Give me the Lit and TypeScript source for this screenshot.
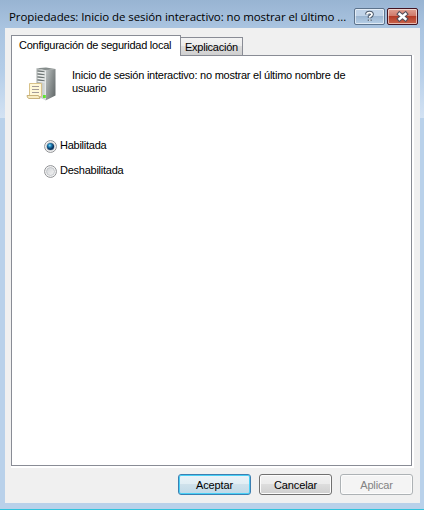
import { LitElement, html, css, svg } from "lit";
import { customElement, property } from "lit/decorators.js";

@customElement("server-icon")
class ServerIcon extends LitElement {
  static styles = css`:host{display:block;width:32px;height:34px} svg{display:block}`;
  render() {
    return html`<svg width="32" height="34" viewBox="0 0 32 34">
      <defs>
        <linearGradient id="side" x1="0" x2="1" y2=".6"><stop offset="0" stop-color="#c4c9c9"/><stop offset=".6" stop-color="#8c9292"/><stop offset="1" stop-color="#6b7172"/></linearGradient>
        <linearGradient id="front" x1="0" x2="1"><stop offset="0" stop-color="#a5abaa"/><stop offset="1" stop-color="#d8dcdb"/></linearGradient>
      </defs>
      <path d="M10.5 1.2 L20 .6 L29.5 2 L19 3.5Z" fill="#858c8b"/>
      <path d="M10.5 1.2 L19 3 V33 L10.5 29Z" fill="url(#front)"/>
      <path d="M19 3 L29.5 2 V28.5 L19.5 33.5Z" fill="url(#side)"/>
      <path d="M19.5 3.5V32" stroke="#e6e9e8"/>
      ${[4, 7, 10, 13].map((y) => svg`<path d="M11.5 ${y} L18.5 ${y + 0.8}" stroke="#6a7271" stroke-width="1.1"/><path d="M11.5 ${y + 1.3} L18.5 ${y + 2.1}" stroke="#f4f6f5" stroke-width="1"/>`)}
      <path d="M17 28h2.8v3H17z" fill="#5ee52c"/>
      <path d="M3.5 16.5H15.5V29.5H3.5Z" fill="#fff8d8" stroke="#d8c28a"/>
      <path d="M6 19.5h7M6 22.5h7M6 25.5h7" stroke="#a59c98"/>
      <path d="M1 28.5H12.5L14 31.5H3Q1 31 1 28.5Z" fill="#f8edc4" stroke="#c9b27c"/>
    </svg>`;
  }
}

@customElement("radio-option")
class RadioOption extends LitElement {
  @property() label = "";
  @property({ type: Boolean }) checked = false;
  static styles = css`
    :host{display:flex;align-items:center;height:14px;gap:3px}
    svg{display:block;flex:none}
    span{white-space:nowrap;padding-bottom:2px}
  `;
  render() {
    return html`<svg width="13" height="13" viewBox="0 0 13 13">
      <defs>
        <radialGradient id="dot" cx=".4" cy=".35"><stop offset="0" stop-color="#9be0fa"/><stop offset=".45" stop-color="#1f83b8"/><stop offset="1" stop-color="#0b3560"/></radialGradient>
        <linearGradient id="well" x2="1" y2="1"><stop offset="0" stop-color="#cfd2d5"/><stop offset="1" stop-color="#f6f6f6"/></linearGradient>
      </defs>
      <circle cx="6.5" cy="6.5" r="5.9" fill="#f8f8f8" stroke="#8e9093"/>
      <circle cx="6.5" cy="6.5" r="4" fill="url(#well)" stroke="#b9bdc1" stroke-width=".8"/>
      ${this.checked ? svg`<circle cx="6.5" cy="6.5" r="3.6" fill="url(#dot)"/>` : ""}
    </svg><span>${this.label}</span>`;
  }
}

@customElement("app-root")
class AppRoot extends LitElement {
  static styles = css`
    :host{display:flex;flex-direction:column;box-sizing:border-box;width:424px;height:510px;padding:0 4px 6px 5px;
      border-bottom:1px solid #2fc4dd;overflow:hidden;color:#000;
      background:linear-gradient(#98b4d2 0,#aac4e0 28px,#b4cde8 70px,#d3e2f3 118px,#b9d1ea 118px);
      font:11px/13px "Liberation Sans",Arial,sans-serif;letter-spacing:-.25px}
    .title{display:flex;height:28px;flex:none;padding:8px 2px 0 4px;box-sizing:border-box}
    .caption{flex:1;min-width:0;white-space:nowrap;font:11.5px/17px "Open Sans","Noto Sans",sans-serif;letter-spacing:-.09px}
    .ctl{box-sizing:border-box;flex:none;width:31px;height:17px;border:1px solid #5d738c;border-radius:2px;margin-left:2px;
      box-shadow:inset 0 0 0 1px #ffffff90;background:linear-gradient(#c0d3e8 0 48%,#9db7d2 50%,#b7cfe7)}
    .ctl svg{display:block}
    .close{border-color:#431422;background:linear-gradient(#dfa193 0,#cf7767 48%,#b43b26 50%,#c9654d)}
    .body{flex:1;background:#f0f0f0;padding:7px 7px 8px 6px;display:flex;flex-direction:column}
    .tabs{display:flex;align-items:flex-end;height:20px;flex:none}
    .tab{box-sizing:border-box;border:1px solid #898c95;border-bottom:0;white-space:nowrap}
    .on{width:170px;height:21px;background:#fff;padding:3px 0 0 7px;margin-bottom:-1px;z-index:1}
    .off{width:62px;height:18px;border-left:0;padding:3px 0 0 4px;background:linear-gradient(#f3f3f3,#ebebeb 50%,#dcdcdc 50%,#d0d0d0)}
    .panel{box-sizing:border-box;width:401px;height:411px;border:1px solid #898c95;background:#fff;box-shadow:1px 1px 0 1px #fff;padding:11px 0 0 14px}
    .head{display:flex;gap:14px}
    .desc{padding-top:2px;width:290px;letter-spacing:-.235px}
    .radios{display:flex;flex-direction:column;gap:11px;margin:38px 0 0 18px}
    .buttons{display:flex;gap:8px;justify-content:flex-end;margin-top:8px}
    .btn{box-sizing:border-box;width:73px;height:21px;border:1px solid #707070;border-radius:3px;text-align:center;
      line-height:20px;letter-spacing:-.15px;box-shadow:inset 0 0 0 1px #fcfcfc;background:linear-gradient(#f2f2f2,#ebebeb 50%,#dddddd 50%,#cfcfcf)}
    .default{border-color:#3c7fb1;box-shadow:inset 0 0 0 1px #48d0f7;background:linear-gradient(#eaf3f8,#e0edf4 50%,#cfe1eb 50%,#bfd9e8)}
    .disabled{border-color:#adb2b5;color:#838383;background:#f4f4f4}
  `;
  render() {
    return html`
      <div class="title">
        <div class="caption"><span>Propiedades: Inicio de sesión interactivo: no mostrar el último ...</span></div>
        <div class="ctl"><svg width="29" height="15" viewBox="0 0 29 15">
          <path d="M12 5.6Q12 3.6 14.5 3.6T17 5.6Q17 6.6 14.7 7.8V9M14.7 10.6V12" fill="none" stroke="#4b5a6c" stroke-width="3.8"/>
          <path d="M12 5.4Q12 3.6 14.5 3.6T17 5.6Q17 6.6 14.7 7.8V8.8M14.7 10.4V11.8" fill="none" stroke="#fff" stroke-width="1.8"/>
        </svg></div>
        <div class="ctl close"><svg width="29" height="15" viewBox="0 0 29 15">
          <path d="M11.5 5L17.5 10M17.5 5L11.5 10" fill="none" stroke="#54505c" stroke-width="4.6" stroke-linecap="square"/>
          <path d="M11.5 5L17.5 10M17.5 5L11.5 10" fill="none" stroke="#fff" stroke-width="2.4" stroke-linecap="square"/>
        </svg></div>
      </div>
      <div class="body">
        <div class="tabs"><div class="tab on">Configuración de seguridad local</div><div class="tab off">Explicación</div></div>
        <div class="panel">
          <div class="head"><server-icon></server-icon>
            <div class="desc">Inicio de sesión interactivo: no mostrar el último nombre de<br>usuario</div></div>
          <div class="radios">
            <radio-option label="Habilitada" checked></radio-option>
            <radio-option label="Deshabilitada"></radio-option>
          </div>
        </div>
        <div class="buttons">
          <div class="btn default">Aceptar</div><div class="btn">Cancelar</div><div class="btn disabled">Aplicar</div>
        </div>
      </div>`;
  }
}
